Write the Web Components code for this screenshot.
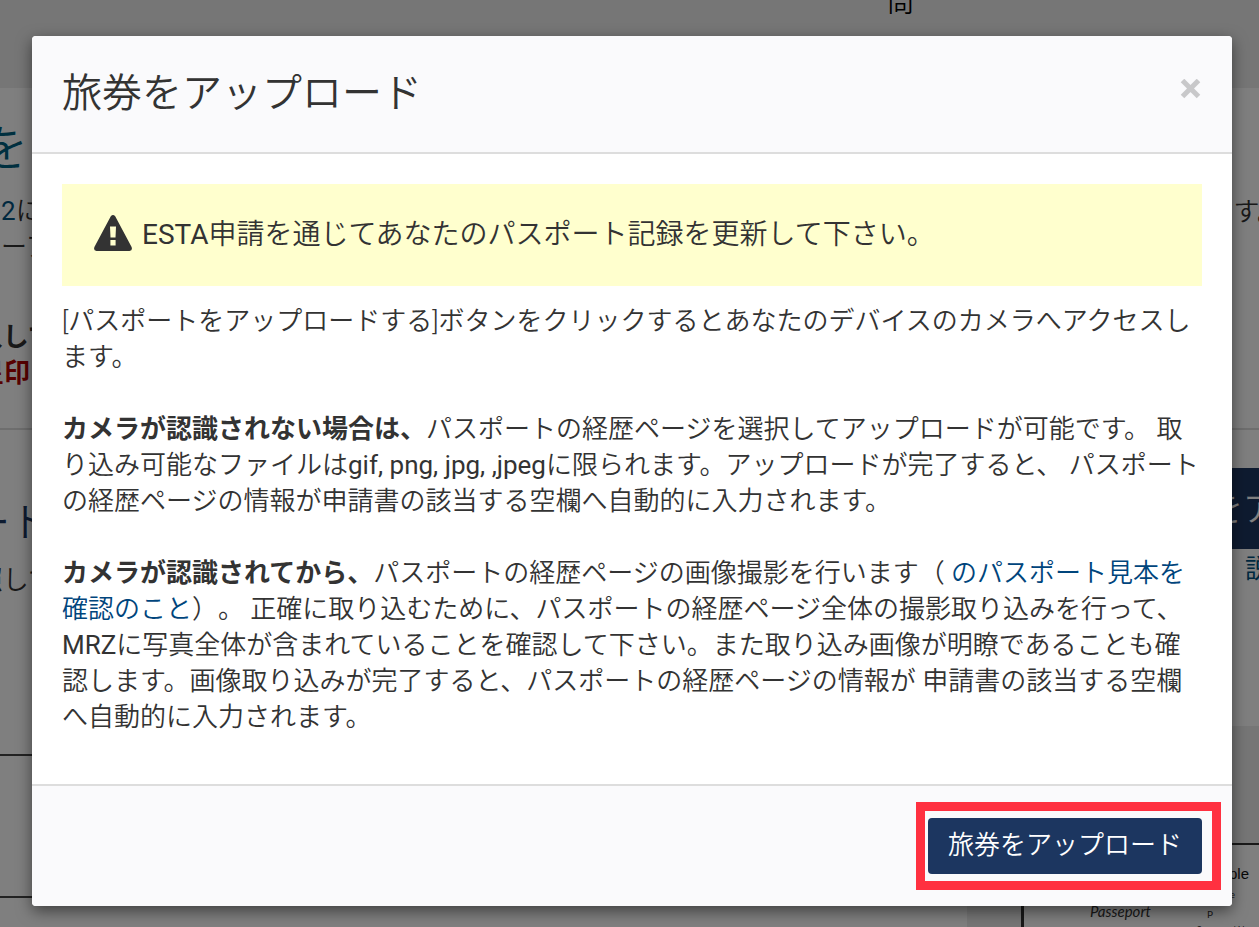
<!DOCTYPE html>
<html lang="ja">
<head>
<meta charset="utf-8">
<title>旅券をアップロード</title>
<style>
  html { background: #fff; }
  body {
    margin: 0;
    min-height: 100vh;
    position: relative;
    overflow: hidden;
    color: #333;
    font: 350 26px/36px Roboto, "Noto Sans CJK JP", sans-serif;
    text-spacing-trim: space-all;
  }
  .latin { font-weight: 400; }
</style>
</head>
<body>
<esta-page></esta-page>
<upload-dialog heading="旅券をアップロード">
  <warning-alert><span class="latin">ESTA</span>申請を通じてあなたのパスポート記録を更新して下さい。</warning-alert>
  <upload-help></upload-help>
  <upload-button slot="footer">旅券をアップロード</upload-button>
</upload-dialog>

<script>
class BaseElement extends HTMLElement {
  connectedCallback() {
    if (this.shadowRoot) return;
    this.attachShadow({ mode: 'open' }).innerHTML = this.markup();
  }
}

/* Application page that lies under the dialog's backdrop. */
customElements.define('esta-page', class extends BaseElement {
  markup() { return `
    <style>
      :host { display: block; position: absolute; inset: 0; overflow: hidden; background: #fff; white-space: nowrap; }
      header { box-sizing: border-box; height: 88px; background: #ededed; color: #000; display: flex; justify-content: center; align-items: flex-start; padding-left: 542px; }
      header span { margin-top: -15px; }
      main { display: flex; justify-content: space-between; }
      .left { width: 40px; display: flex; flex-direction: column; align-items: flex-end; }
      h1, h2, p { margin: 0; font-weight: inherit; }
      a { color: #00517f; text-decoration: none; font-weight: 400; }
      h1 { margin-top: 37px; margin-right: -36px; font-size: 48px; line-height: 48px; color: #006080; }
      .intro { margin: 20px -12px 0 0; }
      .notes { margin: 54px 0 0; width: 100%; font-weight: 700; display: flex; flex-direction: column; align-items: flex-end; }
      .notes p + p { color: #b00000; margin-right: 10px; }
      .notes p:first-child { margin-right: -14px; }
      hr { margin: 0; border: 0; border-top: 2px solid #ddd; width: 100%; }
      .left hr { margin-top: 37px; }
      h2 { margin: 74px -10px 0 0; font-size: 40px; line-height: 40px; color: #1c3660; }
      .see { margin: 18px -14px 0 0; }
      .card { margin-top: 156px; width: 100%; height: 140px; border: solid #444; border-width: 2px 0; }
      .right { width: 292px; display: flex; flex-direction: column; align-items: flex-end; }
      .right .intro { margin: 106px -24px 0 0; }
      .right hr { margin-top: 198px; }
      .open { margin-top: 38px; box-sizing: border-box; width: 60px; height: 81px; padding: 0 0 0 10px; border: 0; background: #1c3660; color: #fff; font: inherit; font-size: 34px; text-align: left; overflow: hidden; }
      .link { margin: 2px -12px 0 0; }
      .sample { margin-top: 139px; width: 100%; height: 201px; background: #ededed; display: flex; flex-direction: column; align-items: flex-end; }
      .bar { margin-top: 72px; width: 24px; height: 5px; background: #1c3660; }
      .passport { margin-top: 45px; box-sizing: border-box; width: 238px; height: 90px; border: solid #333; border-width: 2px 0 0 3px; background: #fff; padding: 19px 10px 0 66px; font: 15px/20px Lato, sans-serif; }
      .passport p { text-align: right; }
      .passport p:first-child { font-family: "Liberation Sans", sans-serif; color: #111; }
      .passport .type { margin-right: 14px; font-size: 10px; line-height: 20px; }
      .row { margin-top: -2px; display: flex; justify-content: space-between; padding-right: 36px; font-style: italic; line-height: 18px; }
      .row span { font-style: normal; font-size: 10px; line-height: 24px; }
      .passport .small { margin: -4px -8px 0 0; font-size: 9px; line-height: 16px; }
    </style>
    <header><span>問</span></header>
    <main>
      <section class="left">
        <h1>をア</h1>
        <div class="intro"><p><a href="#i92">2</a>に</p><p>ーア</p></div>
        <div class="notes"><p>入して</p><p>星印</p></div>
        <hr>
        <h2>ート</h2>
        <p class="see">照して</p>
        <div class="card"></div>
      </section>
      <section class="right">
        <p class="intro">ます。</p>
        <hr>
        <button class="open" type="button">をア</button>
        <a class="link" href="#help">説</a>
        <div class="sample">
          <div class="bar"></div>
          <div class="passport">
            <p>Sample</p>
            <p class="type">Type</p>
            <div class="row">Passeport <span>P</span></div>
            <p class="small">Surname/ Nom</p>
          </div>
        </div>
      </section>
    </main>`; }
});

customElements.define('upload-dialog', class extends BaseElement {
  markup() { return `
    <style>
      :host { display: block; position: relative; box-sizing: border-box; min-height: 100vh; padding: 36px 27px 20px 32px; background: rgba(0,0,0,.5); }
      .panel { border-radius: 4px; overflow: hidden; background: #fff; box-shadow: 0 5px 15px rgba(0,0,0,.5); }
      header { display: flex; justify-content: space-between; align-items: flex-start; padding: 30px; border-bottom: 2px solid #ddd; background: #fafafc; }
      h2 { margin: 0; font-size: 40px; line-height: 56px; font-weight: inherit; }
      .close { display: grid; margin: 13px 0 0; padding: 0; border: 0; background: none; }
      .body { padding: 30px; }
      footer { display: flex; justify-content: flex-end; padding: 32px 30px; border-top: 2px solid #ddd; background: #fafafc; }
    </style>
    <div class="panel" role="dialog" aria-modal="true" aria-labelledby="title">
      <header>
        <h2 id="title">${this.getAttribute('heading')}</h2>
        <button class="close" type="button" aria-label="閉じる">
          <svg width="22" height="20" viewBox="0 0 22 20"><path d="M2.500 1.500 18.500 17.500M18.500 1.500 2.500 17.500" stroke="#c8c8ca" stroke-width="5"/></svg>
        </button>
      </header>
      <div class="body"><slot></slot></div>
      <footer><slot name="footer"></slot></footer>
    </div>`; }
});

customElements.define('warning-alert', class extends BaseElement {
  markup() { return `
    <style>
      :host { display: flex; align-items: flex-start; gap: 10px; padding: 30px 32px; background: #ffffce; font-size: 28px; line-height: 42px; }
      svg { flex: none; margin-top: 1px; }
    </style>
    <svg width="38" height="36" viewBox="0 0 38 36" aria-hidden="true">
      <path fill="#333" fill-rule="evenodd" d="M16.800 1.300Q19-1.300 21.200 1.300L37.600 32Q38.800 35.600 35.500 36H2.500Q-.8 35.600.4 32ZM16 11.500 16.500 22.500H21.500L22 11.500ZM16.400 25V30.500H21.600V25Z"/>
    </svg>
    <span><slot></slot></span>`; }
});

customElements.define('upload-help', class extends BaseElement {
  markup() { return `
    <style>
      :host { display: block; padding: 17px 0 19px; }
      p { margin: 0 0 36px; }
      p:last-child { margin: 0; }
      b { font-weight: 700; }
      .latin { font-weight: 400; }
      a { color: #00457c; text-decoration: none; }
    </style>
    <p>[パスポートをアップロードする]ボタンをクリックするとあなたのデバイスのカメラへアクセスします。</p>
    <p><b>カメラが認識されない場合は、</b>パスポートの経歴ページを選択してアップロードが可能です。 取り込み可能なファイルは<span class="latin">gif, png, jpg, ,jpeg</span>に限られます。アップロードが完了すると、 パスポートの経歴ページの情報が申請書の該当する空欄へ自動的に入力されます。</p>
    <p><b>カメラが認識されてから、</b>パスポートの経歴ページの画像撮影を行います（ <a href="#sample">のパスポート見本を確認のこと</a>）。 正確に取り込むために、パスポートの経歴ページ全体の撮影取り込みを行って、<span class="latin">MRZ</span>に写真全体が含まれていることを確認して下さい。また取り込み画像が明瞭であることも確認します。画像取り込みが完了すると、パスポートの経歴ページの情報が 申請書の該当する空欄へ自動的に入力されます。</p>`; }
});

customElements.define('upload-button', class extends BaseElement {
  markup() { return `
    <style>
      :host { display: block; position: relative; }
      button { display: block; padding: 9px 20px 11px; border: 0; border-radius: 4px; background: #1c3660; color: #fff; font: inherit; }
      .mark { position: absolute; inset: -16px -19px -16px -12px; border: 9px solid #ff3040; pointer-events: none; }
    </style>
    <button type="button"><slot></slot></button>
    <div class="mark"></div>`; }
});
</script>
</body>
</html>
